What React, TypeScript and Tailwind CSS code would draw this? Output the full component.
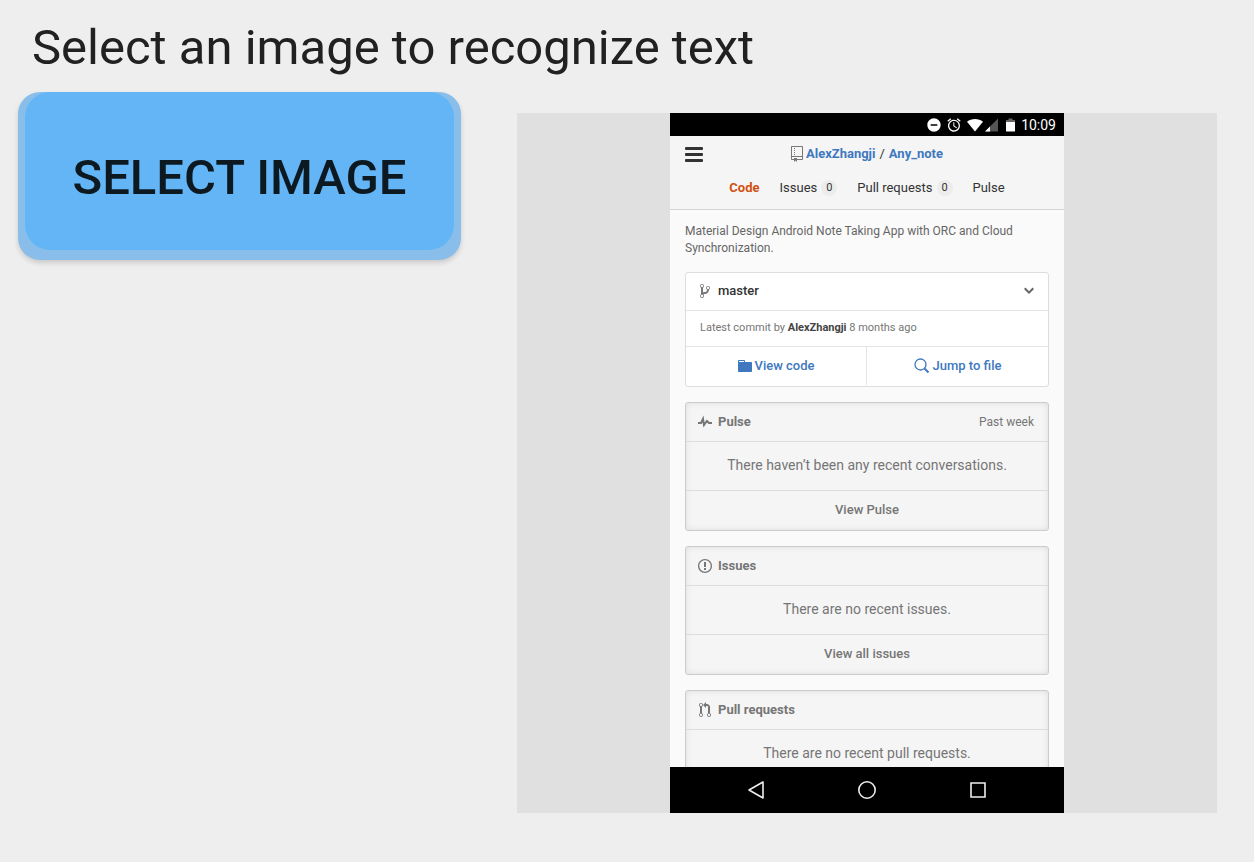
import type { ReactNode } from "react";
import { MdAlarm, MdDoNotDisturbOn } from "react-icons/md";

const glyphs = {
  repo: {
    w: 12,
    d: "M4 9H3V8h1v1zm0-3H3v1h1V6zm0-2H3v1h1V4zm0-2H3v1h1V2zm8-1v12c0 .55-.45 1-1 1H6v2l-1.5-1.5L3 16v-2H1c-.55 0-1-.45-1-1V1c0-.55.45-1 1-1h10c.55 0 1 .45 1 1zm-1 10H1v2h2v-1h3v1h5v-2zm0-10H1v9h10V1z",
  },
  branch: {
    w: 10,
    d: "M10 5c0-1.11-.89-2-2-2a1.993 1.993 0 0 0-1 3.72v.3c-.02.52-.23.98-.63 1.38-.4.4-.86.61-1.38.63-.83.02-1.48.16-2 .45V4.72a1.993 1.993 0 0 0-1-3.72C.88 1 0 1.89 0 3a2 2 0 0 0 1 1.72v6.56c-.59.35-1 .99-1 1.72 0 1.11.89 2 2 2 1.11 0 2-.89 2-2 0-.53-.2-1-.53-1.36.09-.06.48-.41.59-.47.25-.11.56-.17.94-.17 1.05-.05 1.95-.45 2.75-1.25S8.95 7.77 9 6.73h-.02C9.59 6.37 10 5.73 10 5zM2 1.8c.66 0 1.2.55 1.2 1.2 0 .65-.55 1.2-1.2 1.2C1.35 4.2.8 3.65.8 3c0-.65.55-1.2 1.2-1.2zm0 12.41c-.66 0-1.2-.55-1.2-1.2 0-.65.55-1.2 1.2-1.2.65 0 1.2.55 1.2 1.2 0 .65-.55 1.2-1.2 1.2zm6-8c-.66 0-1.2-.55-1.2-1.2 0-.65.55-1.2 1.2-1.2.65 0 1.2.55 1.2 1.2 0 .65-.55 1.2-1.2 1.2z",
  },
  pulse: {
    w: 14,
    d: "M11.5 8L8.8 5.4 6.6 8.5 5.5 1.6 2.38 8H0v2h3.6l.9-1.8.9 5.4L9 8.5l1.6 1.5H14V8h-2.5z",
  },
  issue: {
    w: 14,
    d: "M7 2.3c3.14 0 5.7 2.56 5.7 5.7s-2.56 5.7-5.7 5.7A5.71 5.71 0 0 1 1.3 8c0-3.14 2.56-5.7 5.7-5.7zM7 1C3.14 1 0 4.14 0 8s3.14 7 7 7 7-3.14 7-7-3.14-7-7-7zm1 3H6v5h2V4zm0 6H6v2h2v-2z",
  },
  pull: {
    w: 12,
    d: "M11 11.28V5c-.03-.78-.34-1.47-.94-2.06C9.46 2.35 8.78 2.03 8 2H7V0L4 3l3 3V4h1c.27.02.48.11.69.31.21.2.3.42.31.69v6.28A1.993 1.993 0 0 0 10 15a1.993 1.993 0 0 0 1-3.72zm-1 2.92c-.66 0-1.2-.55-1.2-1.2 0-.65.55-1.2 1.2-1.2.65 0 1.2.55 1.2 1.2 0 .65-.55 1.2-1.2 1.2zM4 3c0-1.11-.89-2-2-2a1.993 1.993 0 0 0-1 3.72v6.56A1.993 1.993 0 0 0 2 15a1.993 1.993 0 0 0 1-3.72V4.72c.59-.34 1-.98 1-1.72zm-.8 10c0 .66-.55 1.2-1.2 1.2-.65 0-1.2-.55-1.2-1.2 0-.65.55-1.2 1.2-1.2.65 0 1.2.55 1.2 1.2zM2 4.2C1.34 4.2.8 3.65.8 3c0-.65.55-1.2 1.2-1.2.65 0 1.2.55 1.2 1.2 0 .65-.55 1.2-1.2 1.2z",
  },
  folder: {
    w: 14,
    d: "M13 4H7V3c0-.66-.31-1-1-1H1c-.55 0-1 .45-1 1v10c0 .55.45 1 1 1h12c.55 0 1-.45 1-1V5c0-.55-.45-1-1-1zM6 4H1V3h5v1z",
  },
  chevron: { w: 10, d: "M5 11L0 6l1.5-1.5L5 8.25 8.5 4.5 10 6l-5 5z" },
};

function Glyph({ name, className = "" }: { name: keyof typeof glyphs; className?: string }) {
  const { w, d } = glyphs[name];
  return (
    <svg aria-hidden="true" width={w} height={16} viewBox={`0 0 ${w} 16`} fill="currentColor" className={`shrink-0 ${className}`}>
      <path fillRule="evenodd" d={d} />
    </svg>
  );
}

function StatusBar() {
  return (
    <div className="flex h-[23px] shrink-0 items-center justify-end bg-black pr-2 text-white">
      <MdDoNotDisturbOn className="size-4" />
      <MdAlarm className="ml-1 size-4" />
      <svg width="18" height="14" viewBox="0 0 18 14" className="ml-1">
        <path d="M9 13.5 1 3.8C5.400.2 12.600.2 17 3.800z" fill="white" />
      </svg>
      <svg width="13" height="14" viewBox="0 0 13 14" className="ml-px">
        <path d="M13 .5V13.500H0z" fill="#555" />
        <path d="M5 8.500V13.500H0z" fill="white" />
      </svg>
      <svg width="9" height="14" viewBox="0 0 9 14" className="ml-2">
        <path d="M2.500 .5h4v1.500H9V4H0V2h2.500z" fill="#666" />
        <path d="M0 4h9v9.500H0z" fill="white" />
      </svg>
      <span className="ml-[6px] text-[14px] leading-4">10:09</span>
    </div>
  );
}

function Count({ children }: { children: ReactNode }) {
  return <span className="ml-1 flex size-4 items-center justify-center rounded-full bg-[#ececec] text-[11px]">{children}</span>;
}

function SummaryCard({ icon, title, note, message, action }: {
  icon: keyof typeof glyphs;
  title: string;
  note?: string;
  message: string;
  action?: string;
}) {
  return (
    <section className="shrink-0 rounded-[3px] border border-[#ccc] bg-[#f5f5f5] text-[#767676] shadow-[inset_0_0_6px_rgba(0,0,0,0.1)]">
      <header className="flex h-[38px] items-center pr-[14px] pb-px pl-3">
        <span className="flex w-5 items-center">
          <span className="flex w-[14px] justify-center"><Glyph name={icon} /></span>
        </span>
        <h2 className="text-[13px] leading-4 font-bold">{title}</h2>
        {note && <span className="ml-auto text-[12px] leading-4">{note}</span>}
      </header>
      <p className="flex h-[50px] items-center justify-center border-y border-[#ddd] pb-[2px] text-[14px]">{message}</p>
      {action && (
        <a href="#" className="flex h-[39px] items-center justify-center pb-px text-[13px] font-medium">{action}</a>
      )}
    </section>
  );
}

function Phone() {
  return (
    <div className="flex aspect-[394/700] h-full flex-col bg-[#fafafa]">
      <StatusBar />
      <header className="h-[74px] shrink-0 border-b border-[#d4d4d4] bg-[#f5f5f5] px-[15px] pt-[9px] text-[13px] leading-[18px] text-[#333]">
        <div className="grid grid-cols-[20px_1fr_20px] items-center">
          <button type="button" aria-label="Menu" className="flex">
            <svg width="18" height="16" viewBox="0 0 18 16" fill="#333">
              <rect y="1" width="18" height="3" rx="1" />
              <rect y="7" width="18" height="3" rx="1" />
              <rect y="13" width="18" height="3" rx="1" />
            </svg>
          </button>
          <div className="flex items-center justify-center">
            <Glyph name="repo" className="mr-[3px] text-[#777]" />
            <a href="#" className="font-bold text-[#4078c0]">AlexZhangji</a>
            <span className="mx-1">/</span>
            <a href="#" className="font-bold text-[#4078c0]">Any_note</a>
          </div>
        </div>
        <nav className="mt-4 flex justify-center gap-5">
          <a href="#" className="font-bold text-[#d2500f]">Code</a>
          <a href="#" className="flex items-center">Issues<Count>0</Count></a>
          <a href="#" className="flex items-center">Pull requests<Count>0</Count></a>
          <a href="#">Pulse</a>
        </nav>
      </header>
      <main className="flex min-h-0 flex-1 flex-col gap-[15px] overflow-hidden px-[15px] pt-[13px]">
        <p className="text-[12px] leading-[17px] text-[#666]">
          Material Design Android Note Taking App with ORC and Cloud Synchronization.
        </p>
        <section className="shrink-0 rounded-[3px] border border-[#ddd] bg-white">
          <button type="button" className="flex h-[37px] w-full items-center pr-[14px] pb-px pl-[14px] text-[#333]">
            <Glyph name="branch" className="mr-2 text-[#777]" />
            <span className="text-[13px] font-medium">master</span>
            <Glyph name="chevron" className="ml-auto text-[#666]" />
          </button>
          <p className="flex h-[37px] items-center border-y border-[#e5e5e5] pl-[14px] text-[11px] text-[#767676]">
            <span>Latest commit by <b className="text-[#444]">AlexZhangji</b> 8 months ago</span>
          </p>
          <div className="grid h-[39px] grid-cols-2 divide-x divide-[#e5e5e5] pb-px text-[13px] font-medium text-[#4078c0]">
            <a href="#" className="flex items-center justify-center gap-[3px]"><Glyph name="folder" />View code</a>
            <a href="#" className="flex items-center justify-center gap-[3px]">
              <svg width="16" height="16" viewBox="0 0 16 16" fill="none" stroke="currentColor">
                <circle cx="6.500" cy="6.500" r="5.500" strokeWidth="1.300" />
                <path d="m10.500 10.500 4 4" strokeWidth="2" />
              </svg>
              Jump to file
            </a>
          </div>
        </section>
        <SummaryCard icon="pulse" title="Pulse" note="Past week" message="There haven’t been any recent conversations." action="View Pulse" />
        <SummaryCard icon="issue" title="Issues" message="There are no recent issues." action="View all issues" />
        <SummaryCard icon="pull" title="Pull requests" message="There are no recent pull requests." />
      </main>
      <nav className="grid h-[46px] shrink-0 grid-cols-3 items-center justify-items-center bg-black px-[31px]">
        <button type="button" aria-label="Back">
          <svg width="20" height="20" viewBox="0 0 20 20" fill="none" stroke="#eee" strokeWidth="1.600"><path d="M17 2v16L3 10z" strokeLinejoin="round" /></svg>
        </button>
        <button type="button" aria-label="Home">
          <svg width="20" height="20" viewBox="0 0 20 20" fill="none" stroke="#eee" strokeWidth="1.600"><circle cx="10" cy="10" r="8.200" /></svg>
        </button>
        <button type="button" aria-label="Recent apps">
          <svg width="20" height="20" viewBox="0 0 20 20" fill="none" stroke="#eee" strokeWidth="1.600"><path d="M3 3h14v14H3z" /></svg>
        </button>
      </nav>
    </div>
  );
}

export default function App() {
  return (
    <div className="min-h-screen bg-[#eee] pb-12 font-[Roboto,sans-serif]">
      <h1 className="px-8 pt-[18px] text-[49px] leading-[60px] text-[#212121]">Select an image to recognize text</h1>
      <div className="flex items-start gap-14 pt-[14px] pr-[37px] pl-[18px]">
        <button
          type="button"
          className="w-[443px] shrink-0 rounded-[22px] bg-[#8abeea] px-[7px] pb-[10px] text-[49px] leading-[58px] font-medium text-[#0d1920] shadow-[0_3px_5px_rgba(0,0,0,0.15)]"
        >
          <span className="block rounded-[25px] bg-[#64b5f6] pt-[57px] pb-[43px]">SELECT IMAGE</span>
        </button>
        <div className="mt-[21px] flex aspect-square min-w-0 flex-1 justify-center bg-[#e0e0e0]">
          <Phone />
        </div>
      </div>
    </div>
  );
}
